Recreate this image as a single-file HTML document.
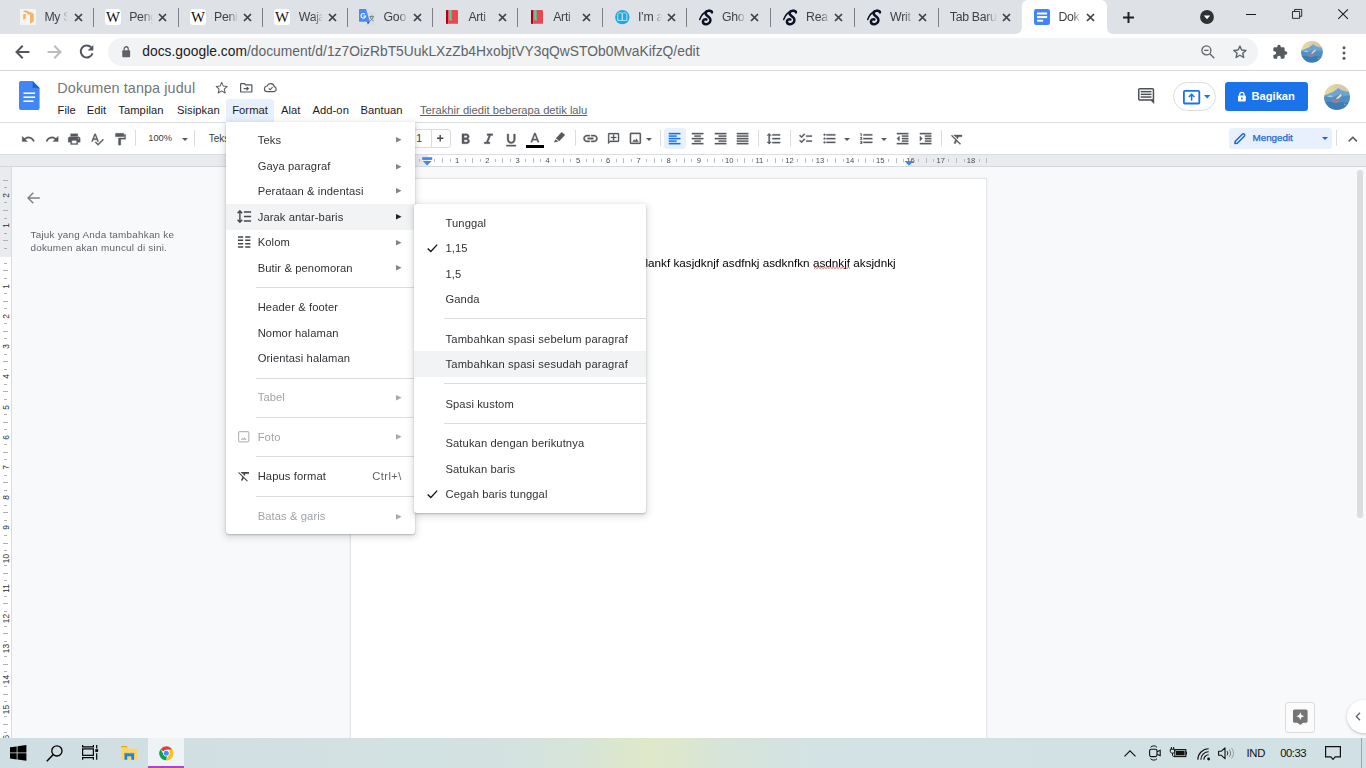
<!DOCTYPE html>
<html>
<head>
<meta charset="utf-8">
<title>Dokumen tanpa judul - Google Dokumen</title>
<style>
*{box-sizing:border-box;margin:0;padding:0}
html,body{width:1366px;height:768px;overflow:hidden;background:#f8f9fa;font-family:"Liberation Sans",sans-serif;}
body{position:relative}
.abs{position:absolute}
svg{position:absolute;overflow:visible}
div,span{white-space:nowrap}
/* gray-aa */
#dochead,#tb,#side,#sidetxt,.mn,.hn,#vruler,#taskbar{will-change:opacity}
</style>
</head>
<body>
<style>
#tabstrip{position:absolute;left:0;top:0;width:1366px;height:34px;background:#dee1e6}
.tab{position:absolute;top:0;height:34px;width:85px}
.tab .fav{left:11.400px;top:9px;width:16px;height:16px}
.tab .tt{position:absolute;left:35.800px;top:9.500px;font-size:12.300px;line-height:15px;color:#3f4347;width:24px;overflow:hidden;letter-spacing:-0.300px;
  -webkit-mask-image:linear-gradient(90deg,#000 60%,transparent 100%);mask-image:linear-gradient(90deg,#000 60%,transparent 100%)}
.tab .cx{left:65px;top:13px;width:9px;height:9px}
.tab .sep{position:absolute;left:84.300px;top:7.500px;width:1px;height:19.500px;background:#7b8085}
#acttab{position:absolute;left:1014px;top:0;width:100px;height:34px}
#toolbar{position:absolute;left:0;top:34px;width:1366px;height:36px;background:#fff}
#omni{position:absolute;left:108px;top:4.400px;width:1149.500px;height:27.400px;border-radius:14px;background:#f1f3f4}
#url{position:absolute;left:34.300px;top:4.500px;font-size:13.800px;line-height:18px;color:#5f6368;letter-spacing:0.020px}
#url b{font-weight:normal;color:#202124}
#chromeborder{position:absolute;left:0;top:70px;width:1366px;height:1px;background:#d5d7da}
</style>
<div id="tabstrip">
<div class="tab" style="left:8.6px"><svg class="fav" viewBox="0 0 16 16" width="16" height="16"><rect width="16" height="16" fill="#f5f4f3"/><path d="M2.5 2.6 5.6 1.3 13.7 4.6 10 5.3 8.6 6 6.2 3.6z" fill="#f3b565"/><path d="M10 5.3 13.7 4.7V12.6L10 14.7z" fill="#f3b565"/><path d="M3.2 5.3 6 5.1 5.6 9.8 3.2 10.8z" fill="#f3b565"/></svg><div class="tt">My S</div><svg class="cx" viewBox="0 0 9 9" width="9" height="9"><path d="M1 1l7 7M8 1l-7 7" stroke="#3c4043" stroke-width="1.700" fill="none"/></svg><div class="sep"></div></div>
<div class="tab" style="left:93.4px"><svg class="fav" viewBox="0 0 16 16" width="16" height="16"><rect width="16" height="16" rx="3.5" fill="#fff"/><text x="8" y="13" text-anchor="middle" font-family="Liberation Serif" font-size="14.5" fill="#111" textLength="14" lengthAdjust="spacingAndGlyphs">W</text></svg><div class="tt">Peng</div><svg class="cx" viewBox="0 0 9 9" width="9" height="9"><path d="M1 1l7 7M8 1l-7 7" stroke="#3c4043" stroke-width="1.700" fill="none"/></svg><div class="sep"></div></div>
<div class="tab" style="left:178.2px"><svg class="fav" viewBox="0 0 16 16" width="16" height="16"><rect width="16" height="16" rx="3.5" fill="#fff"/><text x="8" y="13" text-anchor="middle" font-family="Liberation Serif" font-size="14.5" fill="#111" textLength="14" lengthAdjust="spacingAndGlyphs">W</text></svg><div class="tt">Peni</div><svg class="cx" viewBox="0 0 9 9" width="9" height="9"><path d="M1 1l7 7M8 1l-7 7" stroke="#3c4043" stroke-width="1.700" fill="none"/></svg><div class="sep"></div></div>
<div class="tab" style="left:263.0px"><svg class="fav" viewBox="0 0 16 16" width="16" height="16"><rect width="16" height="16" rx="3.5" fill="#fff"/><text x="8" y="13" text-anchor="middle" font-family="Liberation Serif" font-size="14.5" fill="#111" textLength="14" lengthAdjust="spacingAndGlyphs">W</text></svg><div class="tt">Waja</div><svg class="cx" viewBox="0 0 9 9" width="9" height="9"><path d="M1 1l7 7M8 1l-7 7" stroke="#3c4043" stroke-width="1.700" fill="none"/></svg><div class="sep"></div></div>
<div class="tab" style="left:347.8px"><svg class="fav" viewBox="0 0 16 16" width="16" height="16"><path d="M6 3.3h9.2a.8.8 0 0 1 .8.8v10.6a.8.8 0 0 1-.8.8H9.6z" fill="#dbdcdd"/><path d="M.8 0h6.2l3.9 12.7H.8a.8.8 0 0 1-.8-.8V.8A.8.8 0 0 1 .8 0z" fill="#4a8af4"/><path d="M8 12.7h2.9L8.8 15.5z" fill="#3a3fb5"/><path d="M5.9 5.1A2.3 2.3 0 1 0 6.6 7H4.4" fill="none" stroke="#fff" stroke-width="1.1"/><path d="M10.6 7.6h4.2M12.7 6.3v1.3M11.2 7.8c.6 2 1.8 3.2 3.4 4M14.2 7.8c-.6 2-1.8 3.4-3.4 4.2" stroke="#5b7d88" stroke-width="0.9" fill="none"/></svg><div class="tt">Goo</div><svg class="cx" viewBox="0 0 9 9" width="9" height="9"><path d="M1 1l7 7M8 1l-7 7" stroke="#3c4043" stroke-width="1.700" fill="none"/></svg><div class="sep"></div></div>
<div class="tab" style="left:432.6px"><svg class="fav" viewBox="0 0 16 16" width="16" height="16"><path d="M2 1.2 3.8 1H13.2l.8.8V14.8H3.8L2 14.6z" fill="#e8484f"/><path d="M2 1.3 3.9 1V14.9L2 14.6z" fill="#a4000f"/><rect x="5.2" y="1" width="2.4" height="10.3" fill="#3fdca4"/><path d="M5.2 10.3h2.4v1.6l-1.2-1z" fill="#3fdca4"/><rect x="4" y="1" width="1.2" height="13.8" fill="#f06a72" opacity=".6"/></svg><div class="tt">Arti</div><svg class="cx" viewBox="0 0 9 9" width="9" height="9"><path d="M1 1l7 7M8 1l-7 7" stroke="#3c4043" stroke-width="1.700" fill="none"/></svg><div class="sep"></div></div>
<div class="tab" style="left:517.4px"><svg class="fav" viewBox="0 0 16 16" width="16" height="16"><path d="M2 1.2 3.8 1H13.2l.8.8V14.8H3.8L2 14.6z" fill="#e8484f"/><path d="M2 1.3 3.9 1V14.9L2 14.6z" fill="#a4000f"/><rect x="5.2" y="1" width="2.4" height="10.3" fill="#3fdca4"/><path d="M5.2 10.3h2.4v1.6l-1.2-1z" fill="#3fdca4"/><rect x="4" y="1" width="1.2" height="13.8" fill="#f06a72" opacity=".6"/></svg><div class="tt">Arti</div><svg class="cx" viewBox="0 0 9 9" width="9" height="9"><path d="M1 1l7 7M8 1l-7 7" stroke="#3c4043" stroke-width="1.700" fill="none"/></svg><div class="sep"></div></div>
<div class="tab" style="left:602.2px"><svg class="fav" viewBox="0 0 16 16" width="16" height="16"><circle cx="8.3" cy="8.1" r="7.2" fill="#22a6df"/><path d="M3.8 5.2c0-.9.6-1.4 1.5-1.4h1.6c.8 0 1.4.4 1.4 1.2V11.4H3.8zM8.3 5c0-.8.6-1.2 1.4-1.2h1.6c.9 0 1.5.5 1.5 1.4V11.4H8.3z" fill="none" stroke="#b9e3f6" stroke-width="1"/></svg><div class="tt">I’m a</div><svg class="cx" viewBox="0 0 9 9" width="9" height="9"><path d="M1 1l7 7M8 1l-7 7" stroke="#3c4043" stroke-width="1.700" fill="none"/></svg><div class="sep"></div></div>
<div class="tab" style="left:686.2px"><svg class="fav" viewBox="0 0 16 16" width="16" height="16"><g transform="translate(1.4,1)" fill="none" stroke="#0c1226" stroke-linecap="round"><path d="M12.6 2.4C12.8.6 8 .1 6.4 2.3 5 4.3 7.5 5.5 9.4 7c2.5 2 2.1 5-.4 6.5-2.500 1.500-5.600 .500-5.500-2 .1-1.700 2-2.600 3.500-2" stroke-width="2.500"/><path d="M7.500 1.200C4.500 2.500 1.500 6 .3 9.500" stroke-width="1.500"/><path d="M7 1c2-1 5-.6 5.800 .8" stroke-width="1.600"/></g></svg><div class="tt">Gho</div><svg class="cx" style="left:64.200px" viewBox="0 0 9 9" width="9" height="9"><path d="M1 1l7 7M8 1l-7 7" stroke="#3c4043" stroke-width="1.700" fill="none"/></svg><div class="sep" style="left:83.500px"></div></div>
<div class="tab" style="left:770.3px"><svg class="fav" viewBox="0 0 16 16" width="16" height="16"><g transform="translate(1.4,1)" fill="none" stroke="#0c1226" stroke-linecap="round"><path d="M12.6 2.4C12.8.6 8 .1 6.4 2.3 5 4.3 7.5 5.5 9.4 7c2.5 2 2.1 5-.4 6.5-2.500 1.500-5.600 .500-5.500-2 .1-1.700 2-2.600 3.500-2" stroke-width="2.500"/><path d="M7.500 1.200C4.500 2.500 1.500 6 .3 9.500" stroke-width="1.500"/><path d="M7 1c2-1 5-.6 5.800 .8" stroke-width="1.600"/></g></svg><div class="tt">Rea</div><svg class="cx" style="left:64.200px" viewBox="0 0 9 9" width="9" height="9"><path d="M1 1l7 7M8 1l-7 7" stroke="#3c4043" stroke-width="1.700" fill="none"/></svg><div class="sep" style="left:83.500px"></div></div>
<div class="tab" style="left:854.3px"><svg class="fav" viewBox="0 0 16 16" width="16" height="16"><g transform="translate(1.4,1)" fill="none" stroke="#0c1226" stroke-linecap="round"><path d="M12.6 2.4C12.8.6 8 .1 6.4 2.3 5 4.3 7.5 5.5 9.4 7c2.5 2 2.1 5-.4 6.5-2.500 1.500-5.600 .500-5.500-2 .1-1.700 2-2.600 3.500-2" stroke-width="2.500"/><path d="M7.500 1.200C4.500 2.500 1.500 6 .3 9.500" stroke-width="1.500"/><path d="M7 1c2-1 5-.6 5.800 .8" stroke-width="1.600"/></g></svg><div class="tt">Writ</div><svg class="cx" style="left:64.200px" viewBox="0 0 9 9" width="9" height="9"><path d="M1 1l7 7M8 1l-7 7" stroke="#3c4043" stroke-width="1.700" fill="none"/></svg><div class="sep" style="left:83.500px"></div></div>
<div class="tab" style="left:938.4px"><div class="tt" style="left:11.400px;width:47px;-webkit-mask-image:linear-gradient(90deg,#000 75%,transparent 100%)">Tab Baru</div><svg class="cx" style="left:64px" viewBox="0 0 9 9" width="9" height="9"><path d="M1 1l7 7M8 1l-7 7" stroke="#3c4043" stroke-width="1.700" fill="none"/></svg></div>
<svg id="acttab" viewBox="0 0 100 34" width="100" height="34" style="left:1014px;top:0"><path d="M.8 34c4.500 0 7-2 7-7V7C7.800 2.500 10.300 0 14.800 0H86C90.500 0 93 2.500 93 7V27c0 5 2.500 7 7 7z" fill="#fff"/></svg>
<div class="tab" style="left:1022.600px"><svg class="fav" viewBox="0 0 16 16" width="16" height="16"><rect width="16" height="16" rx="2.300" fill="#4285f4"/><rect x="3.100" y="3.500" width="10" height="2" fill="#fff"/><rect x="3.100" y="7.100" width="10" height="2" fill="#fff"/><rect x="3.100" y="10.700" width="6" height="2" fill="#fff"/></svg><div class="tt" style="color:#3c4043">Dok</div><svg class="cx" style="left:63.700px" viewBox="0 0 9 9" width="9" height="9"><path d="M1 1l7 7M8 1l-7 7" stroke="#3c4043" stroke-width="1.700" fill="none"/></svg></div>
<svg style="left:1123px;top:11.500px" width="11" height="11" viewBox="0 0 11 11"><path d="M5.500 0v11M0 5.500h11" stroke="#202124" stroke-width="2"/></svg>
<svg style="left:1200px;top:9.800px" width="14" height="14" viewBox="0 0 15 15"><circle cx="7.500" cy="7.500" r="7.400" fill="#303134"/><path d="M4 5.800h7l-3.500 4z" fill="#fff"/></svg>
<svg style="left:1246px;top:13.600px" width="10" height="1" viewBox="0 0 10 1"><rect width="10" height="1" fill="#1a1a1a"/></svg>
<svg style="left:1291.900px;top:9.200px" width="10.200" height="9.800" viewBox="0 0 11 11" preserveAspectRatio="none"><path d="M.5 2.800h7.700v7.700H.5zM2.800 2.800V.5h7.700v7.700H8.200" fill="none" stroke="#1a1a1a" stroke-width="1"/></svg>
<svg style="left:1338px;top:8.900px" width="10.200" height="10.200" viewBox="0 0 11 11"><path d="M.3.300l10.400 10.400M10.700.300L.3 10.700" stroke="#1a1a1a" stroke-width="1.100"/></svg>
</div>
<div id="toolbar">
<svg style="left:14.600px;top:10.900px" width="15" height="14" viewBox="0 0 15 14"><path d="M14.400 7H2M7.700 .8 1.500 7l6.200 6.200" fill="none" stroke="#53565a" stroke-width="2"/></svg>
<svg style="left:46.700px;top:10.900px" width="15" height="14" viewBox="0 0 15 14"><path d="M.6 7H13M7.300 .8 13.500 7l-6.200 6.200" fill="none" stroke="#b9bcc0" stroke-width="2"/></svg>
<svg style="left:78.800px;top:10.200px" width="15" height="15" viewBox="0 0 15 15"><path d="M12.100 3.300A6 6 0 1 0 13.500 9.200" fill="none" stroke="#53565a" stroke-width="2"/><path d="M14.300 .9v5.700H8.600z" fill="#53565a"/></svg>
<div id="omni">
<svg style="left:13.900px;top:7.400px" width="8.400" height="11.400" viewBox="0 0 10 12" preserveAspectRatio="none"><rect x=".3" y="4.600" width="9.400" height="7.200" rx="1" fill="#5f6368"/><path d="M2.500 5V3.300a2.500 2.500 0 0 1 5 0V5" fill="none" stroke="#5f6368" stroke-width="1.400"/></svg>
<div id="url"><b>docs.google.com</b>/document/d/1z7OizRbT5UukLXzZb4HxobjtVY3qQwSTOb0MvaKifzQ/edit</div>
<svg style="left:1092.700px;top:6.800px" width="14" height="14" viewBox="0 0 14 14"><circle cx="5.400" cy="5.400" r="4.500" fill="none" stroke="#5f6368" stroke-width="1.300"/><path d="M8.800 8.800l4.500 4.500M3.200 5.400h4.400" stroke="#5f6368" stroke-width="1.300"/></svg>
<svg style="left:1123.900px;top:5.800px" width="15.800" height="15.800" viewBox="0 0 24 24"><path d="M12 3.200l2.700 6 6.500.6-4.900 4.300 1.500 6.400L12 17.100l-5.800 3.400 1.500-6.400-4.900-4.300 6.500-.6z" fill="none" stroke="#5f6368" stroke-width="2.100" stroke-linejoin="round"/></svg>
</div>
<svg style="left:1272px;top:10px" width="16" height="16" viewBox="0 0 24 24"><path d="M20.500 11H19V7c0-1.100-.9-2-2-2h-4V3.500a2.500 2.500 0 0 0-5 0V5H4c-1.100 0-2 .9-2 2v3.800h1.500a2.700 2.700 0 0 1 0 5.400H2V20c0 1.100.9 2 2 2h3.800v-1.500a2.700 2.700 0 0 1 5.400 0V22H17c1.100 0 2-.9 2-2v-4h1.500a2.500 2.500 0 0 0 0-5z" fill="#565a5e"/></svg>
<svg style="left:1301px;top:7.2px" width="21.8" height="21.8" viewBox="0 0 26 26"><defs><clipPath id="avBc"><circle cx="13" cy="13" r="13"/></clipPath><linearGradient id="avBg" x1="0" y1="0" x2="1" y2="0"><stop offset="0" stop-color="#f0dc9e"/><stop offset="1" stop-color="#cbbfae"/></linearGradient><filter id="avBf" x="-10%" y="-10%" width="120%" height="120%"><feGaussianBlur stdDeviation="0.55"/></filter></defs><g clip-path="url(#avBc)"><g filter="url(#avBf)"><rect x="-2" y="-2" width="30" height="30" fill="url(#avBg)"/><path d="M-2 12 3 10.500 6 9 9 8 12 5.800 14.500 4 17 6 20 7 23 7.800 28 6.500V28H-2z" fill="#6ba6d0"/><path d="M-2 13.800 4 12.300 8 13.200 12 12 16 10 20 12 28 11V28H-2z" fill="#4f90c3"/><path d="M3 12.500l3-1.200 3 .8-2 1.200z" fill="#a9cfe0"/><path d="M-2 18.500 6 17.500 12 19.500 18 18 28 19.500V28H-2z" fill="#3a7db4"/><path d="M12 14.500 15 11.500 16.800 9.800 17.800 12 15.500 13.500 13.500 15.500z" fill="#f4dcc2"/><path d="M7.500 16 9.500 13.800 11.500 16.500 13.500 14.500 15.500 17 12 19 8 18z" fill="#a9798f" opacity=".85"/><path d="M20 21l1-2 1 2.500z" fill="#d8b46a" opacity=".8"/></g></g></svg>
<svg style="left:1342.200px;top:11.700px" width="4" height="14" viewBox="0 0 4 14"><circle cx="2" cy="1.700" r="1.500" fill="#565a5e"/><circle cx="2" cy="7" r="1.500" fill="#565a5e"/><circle cx="2" cy="12.300" r="1.500" fill="#565a5e"/></svg>
</div>
<div id="chromeborder"></div>
<style>
#dochead{position:absolute;left:0;top:71px;width:1366px;height:52px;background:#fff}
#title{position:absolute;left:57.3px;top:8px;font-size:14.4px;line-height:18px;color:#72767a;letter-spacing:0.1px}
.menu{position:absolute;top:31.7px;font-size:11.2px;line-height:14px;color:#1f2023;letter-spacing:0.06px}
#fmtbg{position:absolute;left:226px;top:28.4px;width:48px;height:23px;background:#e8f0fe;border-radius:3px 3px 0 0}
#lastedit{position:absolute;left:420px;top:31.7px;font-size:11.2px;line-height:14px;color:#5f6368;text-decoration:underline;letter-spacing:0px}
#share{position:absolute;left:1225px;top:11px;width:83px;height:28.7px;border-radius:3.2px;background:#1a73e8}
#share span{position:absolute;left:26.6px;top:7px;font-size:11.2px;line-height:14px;font-weight:bold;color:#fff;letter-spacing:-0.05px}
#pill{position:absolute;left:1173px;top:11px;width:43px;height:28.7px;border-radius:15px;border:1px solid #dadce0;background:#fff}
</style>
<div id="dochead">
<svg style="left:18.6px;top:10.4px" width="20.6" height="29" viewBox="0 0 20.6 29"><path d="M2 0h11.7l6.9 6.9V27a2 2 0 0 1-2 2H2a2 2 0 0 1-2-2V2a2 2 0 0 1 2-2z" fill="#4285f4"/><path d="M13.7 0l6.900 6.900H13.700z" fill="#1b66d1"/><path d="M13.700 6.900h6.900l0 1.200z" fill="#3b78e0" opacity=".5"/><rect x="4.500" y="11.400" width="11.600" height="1.600" fill="#fff"/><rect x="4.500" y="15.400" width="11.600" height="1.600" fill="#fff"/><rect x="4.500" y="19.400" width="10" height="1.600" fill="#fff"/></svg>
<div id="title">Dokumen tanpa judul</div>
<svg style="left:215.400px;top:9.500px" width="13.400" height="13.400" viewBox="0 0 24 24"><path d="M12 2.500l2.900 6.600 7.100.7-5.400 4.700 1.600 7L12 17.800l-6.200 3.700 1.600-7L2 9.800l7.100-.7z" fill="none" stroke="#54585d" stroke-width="1.800" stroke-linejoin="round"/></svg>
<svg style="left:239.900px;top:12.300px" width="12.500" height="9.600" viewBox="0 0 12.500 9.600"><path d="M.6 1.200c0-.3.300-.6.600-.6h3.100l1.200 1.200h5.800c.3 0 .6.300.6.600v6c0 .3-.3.600-.6.600H1.200c-.3 0-.6-.3-.6-.6z" fill="none" stroke="#54585d" stroke-width="1.200"/><path d="M3.700 5.600h4.600M6.600 3.800l1.800 1.800-1.800 1.800" fill="none" stroke="#54585d" stroke-width="1.100"/></svg>
<svg style="left:264px;top:11.900px" width="13.200" height="9.200" viewBox="0 0 13.200 9.200"><path d="M3.400 8.600A2.800 2.800 0 0 1 3.100 3 3.700 3.700 0 0 1 10.200 3.700 2.500 2.500 0 0 1 10.200 8.600z" fill="none" stroke="#54585d" stroke-width="1.200"/><path d="M4.800 5.500l1.400 1.300 2.400-2.600" fill="none" stroke="#54585d" stroke-width="1.100"/></svg>
<div id="fmtbg"></div>
<div class="menu" style="left:57.500px">File</div>
<div class="menu" style="left:86.700px">Edit</div>
<div class="menu" style="left:118.300px">Tampilan</div>
<div class="menu" style="left:177px">Sisipkan</div>
<div class="menu" style="left:232.200px">Format</div>
<div class="menu" style="left:281px">Alat</div>
<div class="menu" style="left:312.500px">Add-on</div>
<div class="menu" style="left:360.500px">Bantuan</div>
<div id="lastedit">Terakhir diedit beberapa detik lalu</div>
<svg style="left:1138px;top:16.800px" width="16.200" height="16" viewBox="0 0 16.200 16"><path d="M1.800 0h12.600c1 0 1.800.8 1.800 1.800V16l-3.300-3.300H1.800c-1 0-1.800-.8-1.800-1.800V1.800C0 .8.800 0 1.800 0z" fill="#4d5156"/><rect x="1.500" y="1.500" width="13.200" height="9.700" fill="#fff"/><rect x="2.700" y="2.900" width="10.800" height="1.500" fill="#4d5156"/><rect x="2.700" y="5.600" width="10.800" height="1.500" fill="#4d5156"/><rect x="2.700" y="8.300" width="10.800" height="1.500" fill="#4d5156"/></svg>
<div id="pill"></div>
<svg style="left:1182.700px;top:18.600px" width="17.200" height="14.400" viewBox="0 0 17.200 14.400"><rect x=".9" y=".9" width="15.400" height="12.600" rx="1" fill="#fff" stroke="#1a73e8" stroke-width="1.800"/><path d="M8.600 10.800V4.300M5.800 7l2.800-2.800L11.400 7" fill="none" stroke="#1a73e8" stroke-width="1.500"/></svg>
<svg style="left:1203.800px;top:23.600px" width="6.400" height="3.400" viewBox="0 0 6.400 3.400"><path d="M0 0h6.400L3.200 3.400z" fill="#1a73e8"/></svg>
<div id="share"><svg style="left:13px;top:10px" width="7.800" height="9.400" viewBox="0 0 7.800 9.400"><rect y="3.600" width="7.800" height="5.800" rx=".9" fill="#fff"/><path d="M1.700 4V2.600a2.200 2.200 0 0 1 4.400 0V4" fill="none" stroke="#fff" stroke-width="1.200"/><circle cx="3.900" cy="6.500" r=".9" fill="#1a73e8"/></svg><span>Bagikan</span></div>
<svg style="left:1324px;top:12.8px" width="26" height="26" viewBox="0 0 26 26"><defs><clipPath id="avAc"><circle cx="13" cy="13" r="13"/></clipPath><linearGradient id="avAg" x1="0" y1="0" x2="1" y2="0"><stop offset="0" stop-color="#f0dc9e"/><stop offset="1" stop-color="#cbbfae"/></linearGradient><filter id="avAf" x="-10%" y="-10%" width="120%" height="120%"><feGaussianBlur stdDeviation="0.55"/></filter></defs><g clip-path="url(#avAc)"><g filter="url(#avAf)"><rect x="-2" y="-2" width="30" height="30" fill="url(#avAg)"/><path d="M-2 12 3 10.500 6 9 9 8 12 5.800 14.500 4 17 6 20 7 23 7.800 28 6.500V28H-2z" fill="#6ba6d0"/><path d="M-2 13.800 4 12.300 8 13.200 12 12 16 10 20 12 28 11V28H-2z" fill="#4f90c3"/><path d="M3 12.500l3-1.200 3 .8-2 1.200z" fill="#a9cfe0"/><path d="M-2 18.500 6 17.500 12 19.500 18 18 28 19.500V28H-2z" fill="#3a7db4"/><path d="M12 14.500 15 11.500 16.800 9.800 17.800 12 15.500 13.500 13.500 15.500z" fill="#f4dcc2"/><path d="M7.500 16 9.500 13.800 11.500 16.500 13.500 14.500 15.500 17 12 19 8 18z" fill="#a9798f" opacity=".85"/><path d="M20 21l1-2 1 2.500z" fill="#d8b46a" opacity=".8"/></g></g></svg>
</div>
<style>
#tb{position:absolute;left:0;top:122px;width:1366px;height:32px;background:#fff;border-top:1px solid #dcdee1}
.vsep{position:absolute;top:7px;width:1px;height:15.600px;background:#dadce0}
.tbt{position:absolute;font-size:10.400px;line-height:13px;color:#3c4043}
#fsz{position:absolute;left:392px;top:6px;width:58.500px;height:19px;border:1px solid #dadce0;border-radius:3px}
#mode{position:absolute;left:1229px;top:5px;width:103px;height:21px;background:#e8f0fe;border-radius:3px}
#mode span{position:absolute;left:23.500px;top:4.200px;font-size:9.900px;line-height:12px;color:#1967d2;letter-spacing:-0.040px;-webkit-text-stroke:0.250px #1967d2}
</style>
<div id="tb">
<svg style="left:21.3px;top:8.6px" width="14.4" height="14.4" viewBox="0 0 24 24"><path d="M12.5 8c-2.65 0-5.05.99-6.9 2.6L2 7v9h9l-3.62-3.62c1.39-1.16 3.16-1.88 5.12-1.88 3.54 0 6.55 2.31 7.6 5.5l2.37-.78C21.08 11.03 17.15 8 12.5 8z" fill="#565a5f" fill-rule="evenodd" stroke="#565a5f" stroke-width="0.5"/></svg>
<svg style="left:45.1px;top:8.6px" width="14.4" height="14.4" viewBox="0 0 24 24"><path d="M18.4 10.6C16.55 8.99 14.15 8 11.5 8c-4.65 0-8.58 3.03-9.96 7.22L3.9 16c1.05-3.19 4.05-5.5 7.6-5.5 1.95 0 3.73.72 5.12 1.88L13 16h9V7l-3.6 3.6z" fill="#565a5f" fill-rule="evenodd" stroke="#565a5f" stroke-width="0.5"/></svg>
<svg style="left:67px;top:8.6px" width="14.4" height="14.4" viewBox="0 0 24 24"><path d="M19 8H5c-1.66 0-3 1.34-3 3v6h4v4h12v-4h4v-6c0-1.66-1.34-3-3-3zm-3 11H8v-5h8v5zm3-7c-.55 0-1-.45-1-1s.45-1 1-1 1 .45 1 1-.45 1-1 1zm-1-9H6v4h12V3z" fill="#565a5f" fill-rule="evenodd" stroke="#565a5f" stroke-width="0.5"/></svg>
<svg style="left:89.9px;top:8.6px" width="14.4" height="14.4" viewBox="0 0 24 24"><path d="M12.45 16h2.09L9.43 3H7.57L2.46 16h2.09l1.12-3h5.64l1.14 3zm-6.02-5L8.5 5.48 10.57 11H6.43zm15.16.59l-8.09 8.09L9.83 16l-1.41 1.41 5.09 5.09L23 13l-1.41-1.41z" fill="#565a5f" fill-rule="evenodd" stroke="#565a5f" stroke-width="0.5"/></svg>
<svg style="left:112.6px;top:8.6px" width="14.4" height="14.4" viewBox="0 0 24 24"><path d="M18 4V3c0-.55-.45-1-1-1H5c-.55 0-1 .45-1 1v4c0 .55.45 1 1 1h12c.55 0 1-.45 1-1V6h1v4H9v11c0 .55.45 1 1 1h2c.55 0 1-.45 1-1v-9h8V4h-3z" fill="#565a5f" fill-rule="evenodd" stroke="#565a5f" stroke-width="0.5"/></svg>
<div class="vsep" style="left:135px"></div>
<div class="tbt" style="left:148.300px;top:9.300px;font-size:9.300px;letter-spacing:-0.060px">100%</div><svg style="left:181.8px;top:15px" width="6" height="3" viewBox="0 0 6 3"><path d="M0 0h6L3 3z" fill="#565a5f"/></svg>
<div class="vsep" style="left:194px"></div>
<div class="tbt" style="left:208.700px;top:9.300px;font-size:10px">Teks normal</div><svg style="left:290px;top:15px" width="6" height="3" viewBox="0 0 6 3"><path d="M0 0h6L3 3z" fill="#565a5f"/></svg>
<div class="vsep" style="left:302px"></div>
<div class="tbt" style="left:315px;top:9.500px">Arial</div><svg style="left:372px;top:15px" width="6" height="3" viewBox="0 0 6 3"><path d="M0 0h6L3 3z" fill="#565a5f"/></svg>
<div class="vsep" style="left:384px"></div>
<div id="fsz"><div class="abs" style="left:38.200px;top:0;width:1px;height:17px;background:#dadce0"></div><div class="abs" style="left:18px;top:0;width:1px;height:17px;background:#dadce0"></div></div><div class="tbt" style="left:416.200px;top:9.300px;font-size:10.400px">1</div><svg style="left:437.400px;top:12.400px" width="6.400" height="6.400" viewBox="0 0 6.400 6.400"><path d="M3.200 0v6.400M0 3.200h6.400" stroke="#44474b" stroke-width="1.400"/></svg>
<svg style="left:457.05px;top:8.3px" width="17" height="17" viewBox="0 0 24 24"><path d="M15.6 10.79c.97-.67 1.65-1.77 1.65-2.79 0-2.26-1.75-4-4-4H7v14h7.04c2.09 0 3.71-1.7 3.71-3.79 0-1.52-.86-2.82-2.15-3.42zM10 6.5h3c.83 0 1.5.67 1.5 1.5s-.67 1.5-1.5 1.5h-3v-3zm3.5 9H10v-3h3.5c.83 0 1.5.67 1.5 1.5s-.67 1.5-1.5 1.5z" fill="#565a5f" fill-rule="evenodd" stroke="#565a5f" stroke-width="0.5"/></svg>
<svg style="left:480.4px;top:8.3px" width="17" height="17" viewBox="0 0 24 24"><path d="M10 4v2.300h2.500l-3.600 9.400H6V18h8v-2.300h-2.500l3.600-9.400H18V4z" fill="#565a5f" fill-rule="evenodd" stroke="#565a5f" stroke-width="0.5"/></svg>
<svg style="left:503px;top:9px" width="16.4" height="16.4" viewBox="0 0 24 24"><path d="M12 17c3.31 0 6-2.69 6-6V3h-2.5v8c0 1.93-1.57 3.5-3.5 3.5S8.5 12.93 8.5 11V3H6v8c0 3.31 2.69 6 6 6zm-7 2v2h14v-2H5z" fill="#565a5f" fill-rule="evenodd" stroke="#565a5f" stroke-width="0.5"/></svg>
<svg style="left:527.1px;top:8px" width="15.8" height="15.8" viewBox="0 0 24 24"><path d="M11 3L5.5 17h2.25l1.12-3h6.25l1.12 3h2.25L13 3h-2zm-1.380 9L12 5.670 14.380 12H9.620z" fill="#565a5f" fill-rule="evenodd" stroke="#565a5f" stroke-width="0.5"/></svg>
<div class="abs" style="left:525.800px;top:22px;width:18.200px;height:2.900px;background:#000"></div><svg style="left:553px;top:8px" width="13" height="13" viewBox="0 0 13 13"><path d="M8.700 1l3.400 2.900-5.900 6.300-3.300-2.900z" fill="#565a5f"/><path d="M2.600 8.200l2.700 2.400-4.500.9z" fill="#565a5f"/></svg>
<div class="vsep" style="left:575px"></div>
<svg style="left:581.5px;top:7.2px" width="17" height="17" viewBox="0 0 24 24"><path d="M3.9 12c0-1.71 1.39-3.1 3.1-3.1h4V7H7c-2.76 0-5 2.24-5 5s2.24 5 5 5h4v-1.9H7c-1.71 0-3.1-1.39-3.1-3.1zM8 13h8v-2H8v2zm9-6h-4v1.9h4c1.71 0 3.1 1.39 3.1 3.1s-1.39 3.1-3.1 3.1h-4V17h4c2.76 0 5-2.24 5-5s-2.24-5-5-5z" fill="#565a5f" fill-rule="evenodd" stroke="#565a5f" stroke-width="0.5"/></svg>
<svg style="left:606.7px;top:8.8px;transform:scaleX(-1)" width="13.2" height="13.2" viewBox="0 0 24 24"><path d="M22 4c0-1.1-.9-2-2-2H4c-1.1 0-2 .9-2 2v12c0 1.1.9 2 2 2h14l4 4V4zm-2 13.17L18.83 16H4V4h16v13.170zM13 5h-2v4H7v2h4v4h2v-4h4V9h-4z" fill="#565a5f" fill-rule="evenodd" stroke="#565a5f" stroke-width="0.5"/></svg>
<svg style="left:628.15px;top:8px" width="14.8" height="14.8" viewBox="0 0 24 24"><path d="M5 3h14c1.1 0 2 .9 2 2v14c0 1.1-.9 2-2 2H5c-1.1 0-2-.9-2-2V5c0-1.1.9-2 2-2zM5 5v14h14V5zM7.500 17.400l2.400-3.600 1.700 2.200 2.200-3.400 3.100 4.800z" fill="#565a5f" fill-rule="evenodd" stroke="#565a5f" stroke-width="0.5"/></svg>
<svg style="left:646px;top:15px" width="6" height="3" viewBox="0 0 6 3"><path d="M0 0h6L3 3z" fill="#565a5f"/></svg>
<div class="vsep" style="left:660px"></div>
<div class="abs" style="left:664.200px;top:4.600px;width:21.700px;height:21.400px;background:#e8f0fe;border-radius:3px"></div><svg style="left:667.1px;top:8.2px" width="15.2" height="15.2" viewBox="0 0 24 24"><path d="M15 15H3v2h12v-2zm0-8H3v2h12V7zM3 13h18v-2H3v2zm0 8h18v-2H3v2zM3 3v2h18V3H3z" fill="#1a73e8" fill-rule="evenodd" stroke="#1a73e8" stroke-width="0.5"/></svg>
<svg style="left:690.1px;top:8.2px" width="15.2" height="15.2" viewBox="0 0 24 24"><path d="M7 15v2h10v-2H7zm-4 6h18v-2H3v2zm0-8h18v-2H3v2zm4-6v2h10V7H7zM3 3v2h18V3H3z" fill="#565a5f" fill-rule="evenodd" stroke="#565a5f" stroke-width="0.5"/></svg>
<svg style="left:712.8px;top:8.2px" width="15.2" height="15.2" viewBox="0 0 24 24"><path d="M3 21h18v-2H3v2zm6-4h12v-2H9v2zm-6-4h18v-2H3v2zm6-4h12V7H9v2zM3 3v2h18V3H3z" fill="#565a5f" fill-rule="evenodd" stroke="#565a5f" stroke-width="0.5"/></svg>
<svg style="left:735.2px;top:8.2px" width="15.2" height="15.2" viewBox="0 0 24 24"><path d="M3 21h18v-2H3v2zm0-4h18v-2H3v2zm0-4h18v-2H3v2zm0-4h18V7H3v2zm0-6v2h18V3H3z" fill="#565a5f" fill-rule="evenodd" stroke="#565a5f" stroke-width="0.5"/></svg>
<div class="vsep" style="left:758px"></div>
<svg style="left:766px;top:8.1px" width="15.4" height="15.4" viewBox="0 0 24 24"><path d="M6 7h2.5L5 3.5 1.5 7H4v10H1.5L5 20.5 8.500 17H6V7zm4-2v2h12V5H10zm0 14h12v-2H10v2zm0-6h12v-2H10v2z" fill="#565a5f" fill-rule="evenodd" stroke="#565a5f" stroke-width="0.5"/></svg>
<div class="vsep" style="left:790px"></div>
<svg style="left:797.5px;top:8.2px" width="15.2" height="15.2" viewBox="0 0 24 24"><path d="M22 7h-9v2h9V7zm0 8h-9v2h9v-2zM5.540 11L2 7.460l1.410-1.410 2.120 2.120 4.240-4.240 1.410 1.410L5.540 11zm0 8L2 15.460l1.410-1.410 2.120 2.120 4.240-4.240 1.410 1.410L5.540 19z" fill="#565a5f" fill-rule="evenodd" stroke="#565a5f" stroke-width="0.5"/></svg>
<svg style="left:821.8px;top:8.2px" width="15.2" height="15.2" viewBox="0 0 24 24"><path d="M4 10.5c-.83 0-1.5.67-1.5 1.5s.67 1.5 1.5 1.5 1.5-.67 1.5-1.5-.67-1.5-1.5-1.5zm0-6c-.83 0-1.5.67-1.5 1.5S3.170 7.500 4 7.500 5.500 6.830 5.500 6 4.830 4.500 4 4.500zm0 12c-.83 0-1.5.68-1.5 1.5s.68 1.5 1.5 1.5 1.5-.68 1.500-1.500-.670-1.500-1.500-1.500zM7 19h14v-2H7v2zm0-6h14v-2H7v2zm0-8v2h14V5H7z" fill="#565a5f" fill-rule="evenodd" stroke="#565a5f" stroke-width="0.5"/></svg>
<svg style="left:844.2px;top:15px" width="6" height="3" viewBox="0 0 6 3"><path d="M0 0h6L3 3z" fill="#565a5f"/></svg>
<svg style="left:859.1px;top:8.2px" width="15.2" height="15.2" viewBox="0 0 24 24"><path d="M2 17h2v.5H3v1h1v.5H2v1h3v-4H2v1zm1-9h1V4H2v1h1v3zm-1 3h1.800L2 13.100v.900h3v-1H3.200L5 10.900V10H2v1zm5-6v2h14V5H7zm0 14h14v-2H7v2zm0-6h14v-2H7v2z" fill="#565a5f" fill-rule="evenodd" stroke="#565a5f" stroke-width="0.5"/></svg>
<svg style="left:880.9px;top:15px" width="6" height="3" viewBox="0 0 6 3"><path d="M0 0h6L3 3z" fill="#565a5f"/></svg>
<svg style="left:895.4px;top:8.2px" width="15.2" height="15.2" viewBox="0 0 24 24"><path d="M11 17h10v-2H11v2zm-8-5l4 4V8l-4 4zm0 9h18v-2H3v2zM3 3v2h18V3H3zm8 6h10V7H11v2zm0 4h10v-2H11v2z" fill="#565a5f" fill-rule="evenodd" stroke="#565a5f" stroke-width="0.5"/></svg>
<svg style="left:918.1px;top:8.2px" width="15.2" height="15.2" viewBox="0 0 24 24"><path d="M3 21h18v-2H3v2zM3 8v8l4-4-4-4zm8 9h10v-2H11v2zM3 3v2h18V3H3zm8 6h10V7H11v2zm0 4h10v-2H11v2z" fill="#565a5f" fill-rule="evenodd" stroke="#565a5f" stroke-width="0.5"/></svg>
<div class="vsep" style="left:941px"></div>
<svg style="left:949.8px;top:8.6px" width="14.4" height="14.4" viewBox="0 0 24 24"><path d="M3.270 5L2 6.270l6.970 6.970L6.500 19h3l1.570-3.660L16.730 21 18 19.730 3.550 5.270 3.270 5zM6 5v.180L8.820 8h2.400l-.720 1.680 2.100 2.100L14.210 8H20V5H6z" fill="#565a5f" fill-rule="evenodd" stroke="#565a5f" stroke-width="0.5"/></svg>
<div id="mode"><svg style="left:4.800px;top:4.600px" width="12" height="11.400" viewBox="0 0 12 11.400"><path d="M.9 10.500 1.300 8.200 8.300 1.200c.6-.6 1.400-.6 2 0 .6.600.6 1.400 0 2L3.300 10.200z" fill="none" stroke="#1967d2" stroke-width="1.500" stroke-linejoin="round"/></svg><span>Mengedit</span><svg style="left:93px;top:8.800px" width="6" height="3" viewBox="0 0 6 3"><path d="M0 0h6L3 3z" fill="#1967d2"/></svg></div>
<div class="vsep" style="left:1336px"></div>
<svg style="left:1347.500px;top:12.600px" width="9.600" height="6" viewBox="0 0 9.600 6"><path d="M.7 5.400L4.800 1.300 8.900 5.400" fill="none" stroke="#565a5f" stroke-width="1.600"/></svg>
</div>
<style>
#rulerband{position:absolute;left:0;top:154px;width:1366px;height:13px;background:#e9ebee;border-top:1px solid #d9dce0;border-bottom:1px solid #d4d7db}
#rulerwhite{position:absolute;left:427.800px;top:155px;width:481.400px;height:11px;background:#fff}
.ht{position:absolute;width:1px;background:#b9bcc1}
.hn{position:absolute;top:155.800px;font-size:7.600px;line-height:9px;color:#4a4d52;width:20px;text-align:center}
#vruler{position:absolute;left:0;top:167px;width:11px;height:571px;background:#fff;overflow:hidden}
#vrulergray{position:absolute;left:0;top:0;width:11px;height:89.600px;background:#e9ebee}
.vt{position:absolute;height:1px;background:#adb1b6}
.vn{position:absolute;left:-4px;font-size:8.400px;line-height:9px;color:#2a2c2f;width:20px;height:9px;text-align:center;transform:rotate(-90deg)}
#side{position:absolute;left:11px;top:167px;width:340px;height:571px;background:#f8f9fa;border-left:1px solid #dadce0}
#sidetxt{position:absolute;left:30.500px;top:229px;font-size:9.900px;line-height:12.600px;color:#5f6368;letter-spacing:0.230px}
#page{position:absolute;left:349.800px;top:178.300px;width:636.800px;height:570px;background:#fff;border:1px solid #e4e5e8;box-shadow:0 0 2px rgba(60,64,67,.08)}
#doctext{position:absolute;right:470.400px;top:255.400px;font-size:11.730px;line-height:15px;color:#000}
#doctext u{text-decoration:none}
#vscroll{position:absolute;left:1357.200px;top:170px;width:5.800px;height:348px;border-radius:3px;background:#dadce0}
#explore{position:absolute;left:1285px;top:702.200px;width:30.400px;height:30.400px;border:1px solid #dadce0;border-radius:3px;background:#fbfbfb}
#sidetog{position:absolute;left:1346.800px;top:700px;width:33px;height:32.500px;border-radius:17px;background:#fff;box-shadow:0 1px 3px rgba(60,64,67,.3)}
</style>
<div id="rulerband"></div><div id="rulerwhite"></div>
<div class="ht" style="left:358.8px;top:159.100px;height:2.900px"></div><div class="hn" style="left:356.3px">2</div><div class="ht" style="left:373.9px;top:159.100px;height:2.900px"></div><div class="ht" style="left:381.4px;top:158.200px;height:4.500px"></div><div class="ht" style="left:389.0px;top:159.100px;height:2.900px"></div><div class="hn" style="left:386.6px">1</div><div class="ht" style="left:404.1px;top:159.100px;height:2.900px"></div><div class="ht" style="left:411.7px;top:158.200px;height:4.500px"></div><div class="ht" style="left:419.2px;top:159.100px;height:2.900px"></div><div class="ht" style="left:434.4px;top:159.100px;height:2.900px"></div><div class="ht" style="left:441.9px;top:158.200px;height:4.500px"></div><div class="ht" style="left:449.5px;top:159.100px;height:2.900px"></div><div class="hn" style="left:447.0px">1</div><div class="ht" style="left:464.6px;top:159.100px;height:2.900px"></div><div class="ht" style="left:472.2px;top:158.200px;height:4.500px"></div><div class="ht" style="left:479.7px;top:159.100px;height:2.900px"></div><div class="hn" style="left:477.3px">2</div><div class="ht" style="left:494.8px;top:159.100px;height:2.900px"></div><div class="ht" style="left:502.4px;top:158.200px;height:4.500px"></div><div class="ht" style="left:509.9px;top:159.100px;height:2.900px"></div><div class="hn" style="left:507.5px">3</div><div class="ht" style="left:525.1px;top:159.100px;height:2.900px"></div><div class="ht" style="left:532.6px;top:158.200px;height:4.500px"></div><div class="ht" style="left:540.2px;top:159.100px;height:2.900px"></div><div class="hn" style="left:537.7px">4</div><div class="ht" style="left:555.3px;top:159.100px;height:2.900px"></div><div class="ht" style="left:562.9px;top:158.200px;height:4.500px"></div><div class="ht" style="left:570.4px;top:159.100px;height:2.900px"></div><div class="hn" style="left:568.0px">5</div><div class="ht" style="left:585.5px;top:159.100px;height:2.900px"></div><div class="ht" style="left:593.1px;top:158.200px;height:4.500px"></div><div class="ht" style="left:600.7px;top:159.100px;height:2.900px"></div><div class="hn" style="left:598.2px">6</div><div class="ht" style="left:615.8px;top:159.100px;height:2.900px"></div><div class="ht" style="left:623.3px;top:158.200px;height:4.500px"></div><div class="ht" style="left:630.9px;top:159.100px;height:2.900px"></div><div class="hn" style="left:628.5px">7</div><div class="ht" style="left:646.0px;top:159.100px;height:2.900px"></div><div class="ht" style="left:653.6px;top:158.200px;height:4.500px"></div><div class="ht" style="left:661.1px;top:159.100px;height:2.900px"></div><div class="hn" style="left:658.7px">8</div><div class="ht" style="left:676.2px;top:159.100px;height:2.900px"></div><div class="ht" style="left:683.8px;top:158.200px;height:4.500px"></div><div class="ht" style="left:691.4px;top:159.100px;height:2.900px"></div><div class="hn" style="left:688.9px">9</div><div class="ht" style="left:706.5px;top:159.100px;height:2.900px"></div><div class="ht" style="left:714.0px;top:158.200px;height:4.500px"></div><div class="ht" style="left:721.6px;top:159.100px;height:2.900px"></div><div class="hn" style="left:719.2px">10</div><div class="ht" style="left:736.7px;top:159.100px;height:2.900px"></div><div class="ht" style="left:744.3px;top:158.200px;height:4.500px"></div><div class="ht" style="left:751.8px;top:159.100px;height:2.900px"></div><div class="hn" style="left:749.4px">11</div><div class="ht" style="left:767.0px;top:159.100px;height:2.900px"></div><div class="ht" style="left:774.5px;top:158.200px;height:4.500px"></div><div class="ht" style="left:782.1px;top:159.100px;height:2.900px"></div><div class="hn" style="left:779.6px">12</div><div class="ht" style="left:797.2px;top:159.100px;height:2.900px"></div><div class="ht" style="left:804.8px;top:158.200px;height:4.500px"></div><div class="ht" style="left:812.3px;top:159.100px;height:2.900px"></div><div class="hn" style="left:809.9px">13</div><div class="ht" style="left:827.4px;top:159.100px;height:2.900px"></div><div class="ht" style="left:835.0px;top:158.200px;height:4.500px"></div><div class="ht" style="left:842.5px;top:159.100px;height:2.900px"></div><div class="hn" style="left:840.1px">14</div><div class="ht" style="left:857.7px;top:159.100px;height:2.900px"></div><div class="ht" style="left:865.2px;top:158.200px;height:4.500px"></div><div class="ht" style="left:872.8px;top:159.100px;height:2.900px"></div><div class="hn" style="left:870.3px">15</div><div class="ht" style="left:887.9px;top:159.100px;height:2.900px"></div><div class="ht" style="left:895.5px;top:158.200px;height:4.500px"></div><div class="ht" style="left:903.0px;top:159.100px;height:2.900px"></div><div class="hn" style="left:900.6px">16</div><div class="ht" style="left:918.1px;top:159.100px;height:2.900px"></div><div class="ht" style="left:925.7px;top:158.200px;height:4.500px"></div><div class="ht" style="left:933.3px;top:159.100px;height:2.900px"></div><div class="hn" style="left:930.8px">17</div><div class="ht" style="left:948.4px;top:159.100px;height:2.900px"></div><div class="ht" style="left:955.9px;top:158.200px;height:4.500px"></div><div class="ht" style="left:963.5px;top:159.100px;height:2.900px"></div><div class="hn" style="left:961.0px">18</div><div class="ht" style="left:978.6px;top:159.100px;height:2.900px"></div><div class="ht" style="left:986.2px;top:158.200px;height:4.500px"></div>
<svg style="left:422px;top:157px" width="10.400" height="9" viewBox="0 0 10.400 9"><rect x=".2" y=".2" width="10" height="2.700" fill="#4285f4"/><path d="M.8 4h8.800L5.200 8.600z" fill="#4285f4"/></svg><svg style="left:904px;top:160.600px" width="10" height="5" viewBox="0 0 10 5"><path d="M.5 0h9L5 4.800z" fill="#4285f4"/></svg>
<div id="vruler"><div id="vrulergray"></div><div class="vt" style="top:12.7px;left:2.900px;width:5.200px"></div><div class="vt" style="top:20.3px;left:4px;width:3.100px"></div><div class="vn" style="top:23.8px">2</div><div class="vt" style="top:35.4px;left:4px;width:3.100px"></div><div class="vt" style="top:42.9px;left:2.900px;width:5.200px"></div><div class="vt" style="top:50.5px;left:4px;width:3.100px"></div><div class="vn" style="top:54.1px">1</div><div class="vt" style="top:65.6px;left:4px;width:3.100px"></div><div class="vt" style="top:73.2px;left:2.900px;width:5.200px"></div><div class="vt" style="top:80.7px;left:4px;width:3.100px"></div><div class="vt" style="top:95.9px;left:4px;width:3.100px"></div><div class="vt" style="top:103.4px;left:2.900px;width:5.200px"></div><div class="vt" style="top:111.0px;left:4px;width:3.100px"></div><div class="vn" style="top:114.5px">1</div><div class="vt" style="top:126.1px;left:4px;width:3.100px"></div><div class="vt" style="top:133.7px;left:2.900px;width:5.200px"></div><div class="vt" style="top:141.2px;left:4px;width:3.100px"></div><div class="vn" style="top:144.8px">2</div><div class="vt" style="top:156.3px;left:4px;width:3.100px"></div><div class="vt" style="top:163.9px;left:2.900px;width:5.200px"></div><div class="vt" style="top:171.4px;left:4px;width:3.100px"></div><div class="vn" style="top:175.0px">3</div><div class="vt" style="top:186.6px;left:4px;width:3.100px"></div><div class="vt" style="top:194.1px;left:2.900px;width:5.200px"></div><div class="vt" style="top:201.7px;left:4px;width:3.100px"></div><div class="vn" style="top:205.2px">4</div><div class="vt" style="top:216.8px;left:4px;width:3.100px"></div><div class="vt" style="top:224.4px;left:2.900px;width:5.200px"></div><div class="vt" style="top:231.9px;left:4px;width:3.100px"></div><div class="vn" style="top:235.5px">5</div><div class="vt" style="top:247.0px;left:4px;width:3.100px"></div><div class="vt" style="top:254.6px;left:2.900px;width:5.200px"></div><div class="vt" style="top:262.2px;left:4px;width:3.100px"></div><div class="vn" style="top:265.7px">6</div><div class="vt" style="top:277.3px;left:4px;width:3.100px"></div><div class="vt" style="top:284.8px;left:2.900px;width:5.200px"></div><div class="vt" style="top:292.4px;left:4px;width:3.100px"></div><div class="vn" style="top:296.0px">7</div><div class="vt" style="top:307.5px;left:4px;width:3.100px"></div><div class="vt" style="top:315.1px;left:2.900px;width:5.200px"></div><div class="vt" style="top:322.6px;left:4px;width:3.100px"></div><div class="vn" style="top:326.2px">8</div><div class="vt" style="top:337.7px;left:4px;width:3.100px"></div><div class="vt" style="top:345.3px;left:2.900px;width:5.200px"></div><div class="vt" style="top:352.9px;left:4px;width:3.100px"></div><div class="vn" style="top:356.4px">9</div><div class="vt" style="top:368.0px;left:4px;width:3.100px"></div><div class="vt" style="top:375.5px;left:2.900px;width:5.200px"></div><div class="vt" style="top:383.1px;left:4px;width:3.100px"></div><div class="vn" style="top:386.7px">10</div><div class="vt" style="top:398.2px;left:4px;width:3.100px"></div><div class="vt" style="top:405.8px;left:2.900px;width:5.200px"></div><div class="vt" style="top:413.3px;left:4px;width:3.100px"></div><div class="vn" style="top:416.9px">11</div><div class="vt" style="top:428.5px;left:4px;width:3.100px"></div><div class="vt" style="top:436.0px;left:2.900px;width:5.200px"></div><div class="vt" style="top:443.6px;left:4px;width:3.100px"></div><div class="vn" style="top:447.1px">12</div><div class="vt" style="top:458.7px;left:4px;width:3.100px"></div><div class="vt" style="top:466.2px;left:2.900px;width:5.200px"></div><div class="vt" style="top:473.8px;left:4px;width:3.100px"></div><div class="vn" style="top:477.4px">13</div><div class="vt" style="top:488.9px;left:4px;width:3.100px"></div><div class="vt" style="top:496.5px;left:2.900px;width:5.200px"></div><div class="vt" style="top:504.0px;left:4px;width:3.100px"></div><div class="vn" style="top:507.6px">14</div><div class="vt" style="top:519.2px;left:4px;width:3.100px"></div><div class="vt" style="top:526.7px;left:2.900px;width:5.200px"></div><div class="vt" style="top:534.3px;left:4px;width:3.100px"></div><div class="vn" style="top:537.8px">15</div><div class="vt" style="top:549.4px;left:4px;width:3.100px"></div><div class="vt" style="top:557.0px;left:2.900px;width:5.200px"></div><div class="vt" style="top:564.5px;left:4px;width:3.100px"></div><div class="vn" style="top:568.1px">16</div></div>
<div id="side">
<svg style="left:15.300px;top:25px" width="13" height="12" viewBox="0 0 13 12"><path d="M12.800 6H1.500M6.300.700 1 6l5.300 5.300" fill="none" stroke="#7d8186" stroke-width="1.400"/></svg>
</div>
<div id="sidetxt">Tajuk yang Anda tambahkan ke<br>dokumen akan muncul di sini.</div>
<div id="page"></div>
<div id="doctext">asjdnf kajsndf kjansdf kjasndf klajsndfkjlankf kasjdknjf asdfnkj asdknfkn <u>asdnkjf</u> aksjdnkj</div>
<svg style="left:813.500px;top:266.800px" width="36.500" height="2" viewBox="0 0 36.500 2"><path d="M0 1.500L1.5 0.3L3.0 1.5L4.5 0.3L6.0 1.5L7.5 0.3L9.0 1.5L10.5 0.3L12.0 1.5L13.5 0.3L15.0 1.5L16.5 0.3L18.0 1.5L19.5 0.3L21.0 1.5L22.5 0.3L24.0 1.5L25.5 0.3L27.0 1.5L28.5 0.3L30.0 1.5L31.5 0.3L33.0 1.5L34.5 0.3L36.0 1.5" fill="none" stroke="#e8392f" stroke-width="0.800"/></svg>
<div id="vscroll"></div>
<div id="explore"><svg style="left:6.800px;top:6px" width="14.600" height="16.600" viewBox="0 0 14 15"><path d="M1.500 0h11c.8 0 1.500.7 1.500 1.500v9.800c0 .8-.7 1.500-1.500 1.500H9.800L7 15l-2.800-2.200H1.500C.7 12.800 0 12.100 0 11.300V1.500C0 .7.700 0 1.500 0z" fill="#757575"/><path d="M7 2.600l1.100 2.700 2.700 1.100-2.700 1.100L7 10.200 5.900 7.500 3.200 6.400l2.700-1.100z" fill="#fff"/></svg></div>
<div id="sidetog"><svg style="left:8.500px;top:12px" width="6" height="9" viewBox="0 0 6 9"><path d="M5 .700 1.300 4.500 5 8.300" fill="none" stroke="#5f6368" stroke-width="1.300"/></svg></div>
<style>
.mn{position:absolute;background:#fff;border-radius:0 0 3px 3px;box-shadow:0 1.600px 6px 1.600px rgba(60,64,67,.15),0 1px 2px rgba(60,64,67,.3)}
.mi{position:absolute;left:0;height:25.600px;width:100%;font-size:11.200px;line-height:25.600px;color:#303236;letter-spacing:0.100px}
.mi.hl{background:#f1f3f4}
.mi.dis{color:#9fa4aa}
.mi span{position:absolute;top:0.600px}
.mi .sc{color:#5f6368}
.msep{position:absolute;height:1px;background:#dadce0}
.arr{left:170px;top:10.100px}
</style>
<div class="mn" style="left:226.4px;top:121.6px;width:188.6px;height:412.5px"><div class="mi" style="top:5.6px"><span style="left:31.300px">Teks</span><svg class="arr" width="5.600" height="5.600" viewBox="0 0 5.600 5.600"><path d="M0 0l5.600 2.800L0 5.600z" fill="#80868b"/></svg></div><div class="mi" style="top:32.1px"><span style="left:31.300px">Gaya paragraf</span><svg class="arr" width="5.600" height="5.600" viewBox="0 0 5.600 5.600"><path d="M0 0l5.600 2.800L0 5.600z" fill="#80868b"/></svg></div><div class="mi" style="top:56.8px"><span style="left:31.300px">Perataan &amp; indentasi</span><svg class="arr" width="5.600" height="5.600" viewBox="0 0 5.600 5.600"><path d="M0 0l5.600 2.800L0 5.600z" fill="#80868b"/></svg></div><div class="mi hl" style="top:82.4px"><svg style="left:10.600px;top:6.400px" width="14.400" height="13" viewBox="0 0 14.400 13"><path d="M2.900.600v11.800M.6 3.200 2.900.700 5.200 3.200M.6 9.800l2.300 2.500 2.300-2.500" fill="none" stroke="#44474b" stroke-width="1.400"/><path d="M6.900 2h7.200M6.900 6.500h7.200M6.900 11h7.200" stroke="#44474b" stroke-width="1.500"/></svg><span style="left:31.300px">Jarak antar-baris</span><svg class="arr" width="5.600" height="5.600" viewBox="0 0 5.600 5.600"><path d="M0 0l5.600 2.800L0 5.600z" fill="#202124"/></svg></div><div class="mi" style="top:108.0px"><svg style="left:11.600px;top:6.600px" width="12.400" height="12" viewBox="0 0 12.400 12"><path d="M0 .9h5.200M0 4.300h5.200M0 7.700h5.200M0 11.100h5.200M7.200 .9h5.200M7.200 4.300h5.200M7.200 7.700h5.200M7.200 11.100h5.200" stroke="#44474b" stroke-width="1.500"/></svg><span style="left:31.300px">Kolom</span><svg class="arr" width="5.600" height="5.600" viewBox="0 0 5.600 5.600"><path d="M0 0l5.600 2.800L0 5.600z" fill="#80868b"/></svg></div><div class="mi" style="top:133.6px"><span style="left:31.300px">Butir &amp; penomoran</span><svg class="arr" width="5.600" height="5.600" viewBox="0 0 5.600 5.600"><path d="M0 0l5.600 2.800L0 5.600z" fill="#80868b"/></svg></div><div class="msep" style="left:29.600px;right:0;top:165.6px"></div><div class="mi" style="top:172.8px"><span style="left:31.300px">Header &amp; footer</span></div><div class="mi" style="top:198.4px"><span style="left:31.300px">Nomor halaman</span></div><div class="mi" style="top:224.0px"><span style="left:31.300px">Orientasi halaman</span></div><div class="msep" style="left:29.600px;right:0;top:256.0px"></div><div class="mi dis" style="top:263.2px"><span style="left:31.300px">Tabel</span><svg class="arr" width="5.600" height="5.600" viewBox="0 0 5.600 5.600"><path d="M0 0l5.600 2.800L0 5.600z" fill="#a5a9ae"/></svg></div><div class="msep" style="left:29.600px;right:0;top:295.2px"></div><div class="mi dis" style="top:302.4px"><svg style="left:11.800px;top:7px" width="11.400" height="11.400" viewBox="0 0 11.400 11.400"><rect x=".6" y=".6" width="10.200" height="10.200" rx="1.200" fill="none" stroke="#b5b9be" stroke-width="1.200"/><path d="M2.800 8.800l1.500-2.200 1 1.300 1.300-2 2 2.900z" fill="#b5b9be"/></svg><span style="left:31.300px">Foto</span><svg class="arr" width="5.600" height="5.600" viewBox="0 0 5.600 5.600"><path d="M0 0l5.600 2.800L0 5.600z" fill="#a5a9ae"/></svg></div><div class="msep" style="left:29.600px;right:0;top:334.4px"></div><div class="mi" style="top:341.6px"><svg style="left:11px;top:6.200px" width="14.400" height="14.400" viewBox="0 0 24 24"><path d="M3.270 5L2 6.270l6.970 6.970L6.500 19h3l1.570-3.660L16.730 21 18 19.730 3.550 5.270 3.270 5zM6 5v.18L8.820 8h2.400l-.72 1.680 2.100 2.100L14.210 8H20V5H6z" fill="#44474b"/></svg><span style="left:31.300px">Hapus format</span><span class="sc" style="right:13.200px;letter-spacing:0.400px">Ctrl+\</span></div><div class="msep" style="left:29.600px;right:0;top:374.7px"></div><div class="mi dis" style="top:381.9px"><span style="left:31.300px">Batas &amp; garis</span><svg class="arr" width="5.600" height="5.600" viewBox="0 0 5.600 5.600"><path d="M0 0l5.600 2.800L0 5.600z" fill="#a5a9ae"/></svg></div></div>
<div class="mn" style="left:414.1px;top:204.3px;width:232.3px;height:309.0px;border-radius:3px"><div class="mi" style="top:5.8px"><span style="left:31.400px">Tunggal</span></div><div class="mi" style="top:31.4px"><svg style="left:12.700px;top:8.300px" width="10.800" height="8.400" viewBox="0 0 12.400 9.600"><path d="M.8 5.200l3.600 3.400L11.700.700" fill="none" stroke="#111" stroke-width="1.500"/></svg><span style="left:31.400px">1,15</span></div><div class="mi" style="top:57.0px"><span style="left:31.400px">1,5</span></div><div class="mi" style="top:82.6px"><span style="left:31.400px">Ganda</span></div><div class="msep" style="left:29.800px;right:0;top:114.1px"></div><div class="mi" style="top:121.8px"><span style="left:31.400px;letter-spacing:0.165px">Tambahkan spasi sebelum paragraf</span></div><div class="mi hl" style="top:146.3px;height:26.700px"><span style="left:31.400px;top:1.700px;letter-spacing:0.165px">Tambahkan spasi sesudah paragraf</span></div><div class="msep" style="left:29.800px;right:0;top:178.9px"></div><div class="mi" style="top:187.4px"><span style="left:31.400px">Spasi kustom</span></div><div class="msep" style="left:29.800px;right:0;top:219.1px"></div><div class="mi" style="top:225.8px"><span style="left:31.400px">Satukan dengan berikutnya</span></div><div class="mi" style="top:252.3px"><span style="left:31.400px">Satukan baris</span></div><div class="mi" style="top:277.0px"><svg style="left:12.700px;top:8.300px" width="10.800" height="8.400" viewBox="0 0 12.400 9.600"><path d="M.8 5.200l3.600 3.400L11.700.700" fill="none" stroke="#111" stroke-width="1.500"/></svg><span style="left:31.400px">Cegah baris tunggal</span></div></div>
<style>
#taskbar{position:absolute;left:0;top:738px;width:1366px;height:30px;background:linear-gradient(90deg,#cfdee2 0,#d2e0e3 300px,#d3e2e0 500px,#d6e4da 575px,#dde7cd 625px,#e0e8c9 652px,#dce7cf 682px,#d7e4da 725px,#d3e2e3 810px,#d1e0e4 1366px)}
#tbact{position:absolute;left:148px;top:0;width:36px;height:30px;background:rgba(255,255,255,.62)}
#tbact i{position:absolute;left:0;bottom:0;width:36px;height:2.200px;background:#b540c8}
.tray{position:absolute;font-size:11.300px;line-height:14px;color:#111;top:7.700px;letter-spacing:-0.300px}
</style>
<div id="taskbar">
<svg style="left:10px;top:7px" width="16.400" height="15.800" viewBox="0 0 16.400 15.800"><path d="M0 2.300 6.700 1.400V7.500H0zM7.500 1.300 16.400 0V7.500H7.500zM0 8.300H6.700V14.400L0 13.500zM7.500 8.300H16.400V15.800L7.500 14.500z" fill="#000"/></svg>
<svg style="left:45.500px;top:6.500px" width="17" height="17" viewBox="0 0 17 17"><circle cx="10.900" cy="5.900" r="5.100" fill="none" stroke="#000" stroke-width="1.300"/><path d="M7.300 9.500.8 16.200" stroke="#000" stroke-width="1.500"/></svg>
<svg style="left:82px;top:7px" width="16.500" height="15" viewBox="0 0 16.500 15"><path d="M.6 0v1.800h10.800V0M.6 14.800v-2.100h10.800v2.100" fill="none" stroke="#000" stroke-width="1.200"/><rect x=".6" y="3.900" width="10.800" height="6.400" fill="none" stroke="#000" stroke-width="1.200"/><path d="M14.700 0v3.600M14.700 8.200v6.600" stroke="#000" stroke-width="1.200"/><rect x="13.300" y="4.200" width="2.800" height="2.700" fill="#000"/></svg>
<svg style="left:120.800px;top:8px" width="16.400" height="13.800" viewBox="0 0 16.400 13.800"><path d="M0 .6C0 .3.300 0 .6 0h5l1.400 1.600H0z" fill="#e6a417"/><path d="M0 1.500h7l1.300 1.300h7.500c.3 0 .6.300.6.600v9.800c0 .3-.3.600-.6.600H.6c-.3 0-.6-.3-.6-.6z" fill="#fbd568"/><path d="M3.500 6.900h9.600v6.900H10.400V10.300H6.200v3.500H3.500z" fill="#1f7fdc"/><path d="M3.500 6.900h9.600v1.300H3.500z" fill="#3f9af0"/></svg>
<div id="tbact"><i></i></div>
<svg style="left:158.600px;top:7.800px" width="14.600" height="14.600" viewBox="0 0 48 48"><circle cx="24" cy="24" r="23" fill="#fff"/><path d="M24 1a23 23 0 0 1 19.900 11.500H24a11.500 11.500 0 0 0-10 5.800L5.200 10.300A23 23 0 0 1 24 1z" fill="#db4437"/><path d="M43.900 12.500A23 23 0 0 1 23 47l10-17.300a11.500 11.500 0 0 0 1-11.400z" fill="#f4c20d" transform="translate(0,0)"/><path d="M43.900 12.500A23 23 0 0 1 23 47l9.900-17.200A11.500 11.500 0 0 0 34 18.300L33.500 12.500z" fill="#f6c12b"/><path d="M23 47A23 23 0 0 1 5.200 10.300L14 25.800a11.500 11.500 0 0 0 13 5.300z" fill="#0f9d58"/><circle cx="24" cy="24" r="10.400" fill="#fff"/><circle cx="24" cy="24" r="8.300" fill="#4c8bf5"/></svg>
<svg style="left:1124px;top:12px" width="12" height="7" viewBox="0 0 12 7"><path d="M.5 6.400 6 .9l5.500 5.500" fill="none" stroke="#111" stroke-width="1.200"/></svg>
<svg style="left:1148.500px;top:7px" width="12" height="16" viewBox="0 0 12 16"><rect x=".6" y="4.200" width="7.400" height="7.400" rx="1.600" fill="none" stroke="#111" stroke-width="1.100"/><path d="M8 6.800 11.200 5.300v5.400L8 9.200" fill="none" stroke="#111" stroke-width="1.100"/><path d="M1.500 2.300C3 .4 6.500.4 8 2.300M1.500 13.700c1.500 1.900 5 1.900 6.500 0" fill="none" stroke="#111" stroke-width="1"/></svg>
<svg style="left:1169.500px;top:9.300px" width="17" height="11" viewBox="0 0 17 11"><rect x="4.800" y="2.600" width="11" height="7" fill="none" stroke="#111" stroke-width="1.100"/><rect x="6" y="3.800" width="8.600" height="4.600" fill="#111"/><rect x="15.900" y="4.600" width="1.100" height="3" fill="#111"/><path d="M1.400 0v2.200M3.600 0v2.200M.3 2.200h4.400v2.200c0 1-.8 1.800-2.200 1.800S.3 5.400.3 4.400zM2.500 6.200v2.100c0 1 1 1.300 2.300 1.300" fill="none" stroke="#111" stroke-width="1"/></svg>
<svg style="left:1196.500px;top:9.500px" width="13.500" height="12.500" viewBox="0 0 13.500 12.500"><path d="M.8 11.700C.8 5.700 5.700.8 11.700.8" fill="none" stroke="#111" stroke-width="1.100"/><path d="M3.800 11.700c0-4.400 3.500-7.900 7.900-7.900" fill="none" stroke="#111" stroke-width="1.100"/><path d="M6.800 11.700c0-2.700 2.200-4.900 4.900-4.900" fill="none" stroke="#111" stroke-width="1.100"/><circle cx="11.600" cy="11" r="1.400" fill="#111"/></svg>
<svg style="left:1218px;top:9px" width="16.500" height="12.500" viewBox="0 0 16.500 12.500"><path d="M.6 4.200h2.800L7 .8v10.900L3.400 8.300H.6z" fill="none" stroke="#111" stroke-width="1.100" stroke-linejoin="round"/><path d="M9 4.200c1 1.200 1 2.900 0 4.100" fill="none" stroke="#111" stroke-width="1"/><path d="M11.200 2.600c1.900 2.200 1.900 5.100 0 7.300" fill="none" stroke="#777" stroke-width="1"/><path d="M13.400 1c2.800 3.100 2.800 7.400 0 10.500" fill="none" stroke="#999" stroke-width="1"/></svg>
<div class="tray" style="left:1246.500px">IND</div>
<div class="tray" style="left:1280.200px;letter-spacing:-0.500px">00:33</div>
<svg style="left:1325px;top:7.800px" width="16" height="14.500" viewBox="0 0 16 14.500"><path d="M.6.600h14.800v10.200H10.200L8 13.400 5.800 10.800H.6z" fill="none" stroke="#111" stroke-width="1.200"/></svg>
<div class="abs" style="left:1361px;top:0;width:1px;height:30px;background:#9aa8ab"></div>
</div>
</body>
</html>
